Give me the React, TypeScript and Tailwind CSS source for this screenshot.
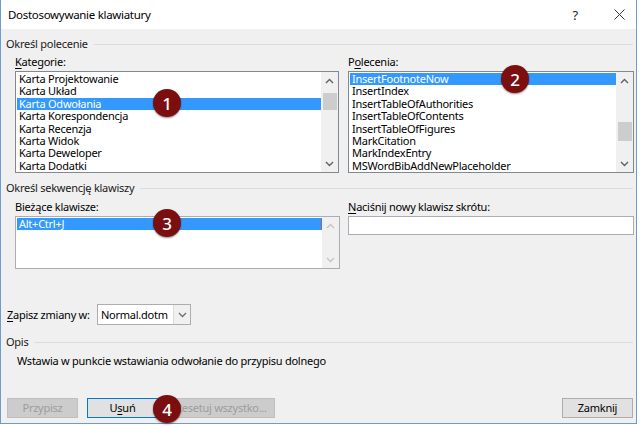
import React from "react";

const F = "font-['Noto_Sans','Open_Sans',sans-serif]";

function GroupHeader({ text }: { text: string }) {
  return (
    <div className="flex items-center h-[16px] pl-[5px] pr-[3px]">
      <span className="text-[#1a1a1a] leading-[16px] whitespace-nowrap">{text}</span>
      <div className="flex-1 h-px bg-[#dcdcdc] ml-[6px]" />
    </div>
  );
}

function Chevron({ up, color }: { up?: boolean; color: string }) {
  return (
    <svg width="9" height="6" viewBox="0 0 9 6">
      <path
        d={up ? "M1 5 L4.5 1.5 L8 5" : "M1 1 L4.5 4.5 L8 1"}
        fill="none"
        stroke={color}
        strokeWidth="1.4"
      />
    </svg>
  );
}

function ScrollBar({
  thumbTop,
  thumbH,
  disabled,
}: {
  thumbTop?: number;
  thumbH?: number;
  disabled?: boolean;
}) {
  const c = disabled ? "#c4c4c4" : "#606060";
  return (
    <div className="w-[17px] flex flex-col bg-[#f0f0f0]">
      <div className="h-[17px] flex items-center justify-center">
        <Chevron up color={c} />
      </div>
      <div className="flex-1 flex flex-col items-center">
        {thumbH ? (
          <div
            className="w-[14px] bg-[#cdcdcd]"
            style={{ marginTop: thumbTop, height: thumbH }}
          />
        ) : null}
      </div>
      <div className="h-[17px] flex items-center justify-center">
        <Chevron color={c} />
      </div>
    </div>
  );
}

function ListBox({
  items,
  selected,
  width,
  height,
  thumbTop,
  thumbH,
}: {
  items: string[];
  selected: number;
  width: string;
  height: string;
  thumbTop: number;
  thumbH: number;
}) {
  return (
    <div className={`${width} ${height} border border-[#828790] bg-white flex`}>
      <div className="flex-1 flex flex-col pt-[1px] pl-[1px] overflow-hidden">
        {items.map((t, i) => (
          <div
            key={t}
            className={`h-[12.4px] leading-[12.4px] pl-[2px] whitespace-nowrap ${
              i === selected ? "bg-[#3399ff] text-white" : "text-black"
            }`}
          >
            {t}
          </div>
        ))}
      </div>
      <ScrollBar thumbTop={thumbTop} thumbH={thumbH} />
    </div>
  );
}

function Button({
  children,
  w,
  disabled,
  focused,
}: {
  children: React.ReactNode;
  w: string;
  disabled?: boolean;
  focused?: boolean;
}) {
  const cls = disabled
    ? "bg-[#cccccc] border-[#bfbfbf] text-[#9d9d9d]"
    : focused
    ? "bg-[#e1e1e1] border-[#0078d7] text-black"
    : "bg-[#e1e1e1] border-[#adadad] text-black";
  return (
    <div
      className={`${w} h-[20px] border ${cls} flex items-center justify-center whitespace-nowrap leading-[16px]`}
    >
      {children}
    </div>
  );
}

function Badge({ n, x, y }: { n: number; x: string; y: string }) {
  return (
    <div
      className={`absolute ${x} ${y} w-[28px] h-[28px] rounded-full bg-[#7b0f0f] shadow-[0_1px_2px_rgba(0,0,0,0.45)] flex items-center justify-center text-white text-[17px] font-medium leading-none tracking-normal`}
    >
      {n}
    </div>
  );
}

export default function App() {
  const cats = [
    "Karta Projektowanie",
    "Karta Układ",
    "Karta Odwołania",
    "Karta Korespondencja",
    "Karta Recenzja",
    "Karta Widok",
    "Karta Deweloper",
    "Karta Dodatki",
  ];
  const cmds = [
    "InsertFootnoteNow",
    "InsertIndex",
    "InsertTableOfAuthorities",
    "InsertTableOfContents",
    "InsertTableOfFigures",
    "MarkCitation",
    "MarkIndexEntry",
    "MSWordBibAddNewPlaceholder",
  ];
  return (
    <div className={`w-[640px] h-[427px] bg-white relative ${F} text-[11px] tracking-[-0.25px]`}>
      <div className="w-[637px] h-[424px] border-x border-b border-[#6b9bd0] flex flex-col">
        {/* title bar */}
        <div className="h-[29px] bg-white flex items-center pl-[7px] pr-[11px]">
          <span className="text-[11.5px] tracking-[-0.3px] text-black leading-[16px]">
            Dostosowywanie klawiatury
          </span>
          <span className="ml-auto text-[13px] text-[#222] leading-[16px] mr-[36px]">?</span>
          <svg width="11" height="11" viewBox="0 0 11 11">
            <path d="M0.5 0.5 L10.5 10.5 M10.5 0.5 L0.5 10.5" stroke="#333" strokeWidth="1" />
          </svg>
        </div>
        {/* body */}
        <div className="flex-1 bg-[#f0f0f0] flex flex-col">
          <div className="mt-[7px]">
            <GroupHeader text="Określ polecenie" />
          </div>
          <div className="flex mt-[2px] pl-[14px]">
            <div className="w-[333px] flex flex-col">
              <div className="h-[16px] leading-[16px]">
                <span className="underline underline-offset-2">K</span>ategorie:
              </div>
              <div className="mt-[1px]">
                <ListBox
                  items={cats}
                  selected={2}
                  width="w-[324px]"
                  height="h-[102px]"
                  thumbTop={4}
                  thumbH={17}
                />
              </div>
            </div>
            <div className="w-[286px] flex flex-col">
              <div className="h-[16px] leading-[16px]">
                P<span className="underline underline-offset-2">o</span>lecenia:
              </div>
              <div className="mt-[1px]">
                <ListBox
                  items={cmds}
                  selected={0}
                  width="w-[286px]"
                  height="h-[102px]"
                  thumbTop={33}
                  thumbH={19}
                />
              </div>
            </div>
          </div>

          <div className="mt-[7px]">
            <GroupHeader text="Określ sekwencję klawiszy" />
          </div>
          <div className="flex mt-[3px] pl-[14px]">
            <div className="w-[333px] flex flex-col">
              <div className="h-[16px] leading-[16px]">Bieżące klawisze:</div>
              <div className="mt-[1px] w-[325px] h-[53px] border border-[#abadb3] bg-white flex">
                <div className="flex-1 pt-[1px] pl-[1px]">
                  <div className="h-[12px] leading-[12px] pl-[2px] bg-[#3399ff] text-white border-r border-[#8a6a8a]">
                    Alt+Ctrl+J
                  </div>
                </div>
                <ScrollBar disabled />
              </div>
            </div>
            <div className="w-[286px] flex flex-col">
              <div className="h-[16px] leading-[16px]">
                <span className="underline underline-offset-2">N</span>aciśnij nowy klawisz skrótu:
              </div>
              <div className="mt-[1px] w-[286px] h-[19px] border border-[#abadb3] bg-white" />
            </div>
          </div>

          <div className="flex items-center mt-[35px] pl-[6px]">
            <div className="w-[90px] leading-[16px]">
              <span className="underline underline-offset-2">Z</span>apisz zmiany w:
            </div>
            <div className="w-[94px] h-[21px] border border-[#adadad] bg-white flex">
              <div className="flex-1 flex items-center pl-[3px] leading-[16px]">Normal.dotm</div>
              <div className="w-[17px] bg-[#f0f0f0] border-l border-[#dcdcdc] flex items-center justify-center">
                <Chevron color="#707070" />
              </div>
            </div>
          </div>

          <div className="mt-[9px]">
            <GroupHeader text="Opis" />
          </div>
          <div className="mt-[3px] pl-[16px] leading-[16px]">
            Wstawia w punkcie wstawiania odwołanie do przypisu dolnego
          </div>

          <div className="flex mt-[29px] pl-[6px] pr-[3px] gap-[9px]">
            <Button w="w-[71px]" disabled>
              Przypisz
            </Button>
            <Button w="w-[71px]" focused>
              U<span className="underline underline-offset-2">s</span>uń
            </Button>
            <Button w="w-[108px]" disabled>
              Resetuj wszystko...
            </Button>
            <div className="ml-auto">
              <Button w="w-[71px]">Zamknij</Button>
            </div>
          </div>
        </div>
      </div>
      <Badge n={1} x="left-[153px]" y="top-[89px]" />
      <Badge n={2} x="left-[501px]" y="top-[65px]" />
      <Badge n={3} x="left-[153px]" y="top-[209px]" />
      <Badge n={4} x="left-[153px]" y="top-[395px]" />
    </div>
  );
}
